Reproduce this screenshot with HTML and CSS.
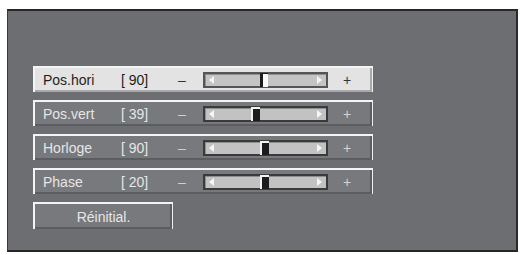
FILE: index.html
```html
<!DOCTYPE html>
<html>
<head>
<meta charset="utf-8">
<link rel="stylesheet" href="styles.css">
</head>
<body>
<div class="frame">
  <div class="menu">
    <div class="row selected">
      <span class="label">Pos.hori</span>
      <span class="value">[ 90]</span>
      <span class="minus">–</span>
      <div class="track">
        <span class="arrow left"></span>
        <span class="thumb" style="left:55px"></span>
        <span class="arrow right"></span>
      </div>
      <span class="plus">+</span>
    </div>
    <div class="row">
      <span class="label">Pos.vert</span>
      <span class="value">[ 39]</span>
      <span class="minus">–</span>
      <div class="track">
        <span class="arrow left"></span>
        <span class="thumb" style="left:46px"></span>
        <span class="arrow right"></span>
      </div>
      <span class="plus">+</span>
    </div>
    <div class="row">
      <span class="label">Horloge</span>
      <span class="value">[ 90]</span>
      <span class="minus">–</span>
      <div class="track">
        <span class="arrow left"></span>
        <span class="thumb" style="left:55px"></span>
        <span class="arrow right"></span>
      </div>
      <span class="plus">+</span>
    </div>
    <div class="row">
      <span class="label">Phase</span>
      <span class="value">[ 20]</span>
      <span class="minus">–</span>
      <div class="track">
        <span class="arrow left"></span>
        <span class="thumb" style="left:55px"></span>
        <span class="arrow right"></span>
      </div>
      <span class="plus">+</span>
    </div>
    <div class="button">Réinitial.</div>
  </div>
</div>
</body>
</html>
```

FILE: styles.css
```css
html, body {
  margin: 0;
  padding: 0;
  background: #ffffff;
}

body {
  font-family: "Liberation Sans", Arial, sans-serif;
}

.frame {
  box-sizing: border-box;
  margin: 9px 0 0 7px;
  width: 511px;
  height: 243px;
  background: #6d6e72;
  border-top: 2px solid #262626;
  border-left: 1px solid #3a3a3a;
  border-right: 2px solid #2a2a2a;
  border-bottom: 2px solid #262626;
  padding: 55px 0 0 25px;
}

.menu {
  display: flex;
  flex-direction: column;
  gap: 8px;
}

.row {
  box-sizing: border-box;
  width: 340px;
  height: 26px;
  display: flex;
  align-items: center;
  background: #78797d;
  border-top: 2px solid #f4f4f4;
  border-left: 2px solid #f4f4f4;
  border-right: 1px solid #f0f0f0;
  box-shadow: inset -2px -2px 0 #5c5d61;
  padding-left: 8px;
  font-size: 14px;
  color: #e6e6e6;
}

.row.selected {
  background: #e3e3e3;
  color: #1e1e1e;
  box-shadow: inset -2px -2px 0 #a9a9ab;
}

.label {
  width: 78px;
}

.value {
  width: 57px;
}

.minus {
  width: 25px;
  color: #d0d0d0;
}

.row.selected .minus,
.row.selected .plus {
  color: #333333;
}

.track {
  position: relative;
  box-sizing: border-box;
  width: 125px;
  height: 16px;
  background: #c2c2c2;
  border: 2px solid #3a3a3a;
  box-shadow: inset 1px 1px 0 #8e8e8e;
}

.row.selected .track {
  border-color: #555555;
  background: #c4c4c4;
}

.arrow {
  position: absolute;
  top: 2px;
  width: 0;
  height: 0;
  border-top: 4px solid transparent;
  border-bottom: 4px solid transparent;
}

.arrow.left {
  left: 4px;
  border-right: 5px solid #f6f6f6;
}

.arrow.right {
  right: 4px;
  border-left: 5px solid #f6f6f6;
}

.thumb {
  position: absolute;
  top: -1px;
  bottom: -1px;
  width: 9px;
  box-sizing: border-box;
  background: #1c1c1e;
  border-top: 2px solid #f2f2f2;
  border-left: 2px solid #f2f2f2;
}

.row.selected .thumb {
  width: 8px;
  background: #fafafa;
  border-top: 1px solid #1c1c1c;
  border-left: 3px solid #1c1c1c;
}

.plus {
  margin-left: 15px;
  color: #d4d4d4;
}

.button {
  box-sizing: border-box;
  width: 140px;
  height: 27px;
  display: flex;
  align-items: center;
  justify-content: center;
  background: #78797d;
  border-top: 2px solid #f4f4f4;
  border-left: 2px solid #f4f4f4;
  border-right: 1px solid #f0f0f0;
  box-shadow: inset -2px -2px 0 #5c5d61;
  font-size: 14px;
  color: #e6e6e6;
}
```
